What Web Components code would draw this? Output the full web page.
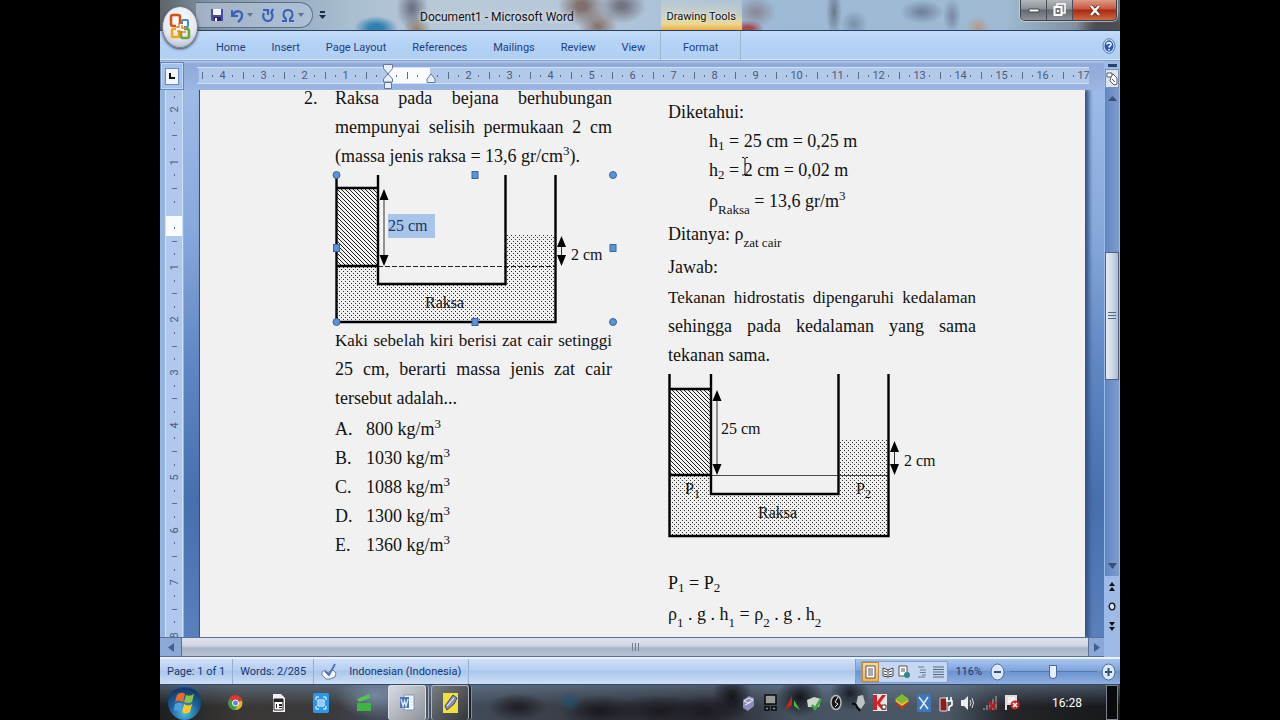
<!DOCTYPE html>
<html lang="id">
<head>
<meta charset="utf-8">
<title>Document1 - Microsoft Word</title>
<style>
html,body{margin:0;min-height:100%;background:#000}
body{font-family:Roboto,"Open Sans",sans-serif;font-size:11px;color:#1f3f77}
</style>
</head>
<body>
<desktop-stage>
  <word-window></word-window>
  <task-bar></task-bar>
</desktop-stage>
<script>
const reset = `<style>
*{box-sizing:border-box}
button{font:inherit;color:inherit;background:none;border:0;padding:0;margin:0;display:inline-flex;align-items:center;justify-content:center}
a{color:inherit;text-decoration:none}
svg{display:block}
</style>`;
const define = (name, html) => customElements.define(name, class extends HTMLElement {
  constructor() {
    super();
    this.attachShadow({mode: "open"}).innerHTML = reset + (typeof html === "function" ? html(this) : html);
  }
});

/* Ruler marks: numbers on whole units, ticks on halves, dots on quarters */
const marks = (from, to, hidden) => {
  let out = "";
  for (let i = from; i <= to; i++) {
    if (hidden.includes(i)) out += `<span class="c" data-i="${i}"></span>`;
    else if (i % 4 === 0) out += `<span class="c n"><b>${Math.abs(i / 4)}</b></span>`;
    else out += `<span class="c"><i class="${i % 2 === 0 ? "tick" : "dot"}"></i></span>`;
  }
  return out;
};

define("title-bar", `<style>
:host{display:flex;align-items:center;height:31px;border-bottom:1px solid #27405f;color:#111;font-size:12px;
 background:
 radial-gradient(ellipse 22px 12px at 216px 28px,#2e80b0 30%,transparent),
 radial-gradient(ellipse 16px 22px at 252px 8px,#6f7486 10%,transparent),
 radial-gradient(ellipse 14px 14px at 257px 30px,#9c8568 10%,transparent),
 radial-gradient(ellipse 24px 20px at 422px 6px,#80716f 20%,transparent),
 radial-gradient(ellipse 20px 18px at 438px 26px,#8a7773 10%,transparent),
 radial-gradient(ellipse 24px 18px at 462px 6px,#747482 15%,transparent),
 radial-gradient(ellipse 20px 16px at 596px 12px,#8c8b99 10%,transparent),
 radial-gradient(ellipse 16px 9px at 588px 29px,#a24a55 30%,transparent),
 radial-gradient(ellipse 8px 26px at 674px 12px,#6f7f92 10%,transparent),
 radial-gradient(ellipse 14px 14px at 694px 24px,#7d93ac 10%,transparent),
 radial-gradient(ellipse 22px 12px at 762px 12px,#71839d 10%,transparent),
 radial-gradient(ellipse 9px 18px at 792px 16px,#7a8da5 10%,transparent),
 radial-gradient(ellipse 12px 12px at 818px 28px,#b39c92 10%,transparent),
 radial-gradient(ellipse 30px 20px at 946px 28px,#4b4d52 40%,transparent),
 linear-gradient(90deg,#5f6468,#8294a4 5%,#a9bfd2 20%,#b9c9d7 30%,#b5c7d9 45%,#9dbad6 62%,#9fbad2 88%,#6f7680)}
.qat{display:flex;align-items:center;gap:7px;width:117px;height:26px;margin-left:36px;padding-left:14px;border:1px solid #5d6f88;border-left:0;border-radius:0 14px 14px 0;background:#b9c9dd99;align-self:flex-start;margin-top:2px}
.qat .drop{margin:0 2px 0 -4px}
.more{margin-left:6px}
h1{font:inherit;font-size:12px;margin:0 0 0 94px;padding-top:3px;white-space:nowrap;text-shadow:0 0 4px #fff}
.ctx{align-self:stretch;width:81px;margin-left:87px;display:flex;align-items:center;justify-content:center;padding-top:3px;font-size:11px;white-space:nowrap;background:linear-gradient(#dfe2cf33,#dfdcc0aa 55%,#ecd98c 80%,#e9ae48);text-shadow:0 0 3px #fff}
.win{display:flex;margin:0 3px 0 auto;align-self:flex-start;height:21px;border:1px solid #3c434d;border-top:0;border-radius:0 0 5px 5px;overflow:hidden;box-shadow:0 0 0 1px #d5dbe3aa}
.win button{width:26px;background:linear-gradient(#b4b8bd,#8b9096 45%,#62686f 50%,#8e9399);border-right:1px solid #4b5058}
.win .x{width:43px;border:0;background:linear-gradient(#dd9a86,#c8553e 45%,#a92811 50%,#cf6a45)}
</style>
<div class="qat">
<button aria-label="Save"><svg width="14" height="14"><path d="M1 1h12v12H2L1 12z" fill="#4a48a8"/><path d="M3 1h8v6H3z" fill="#f1f4fb"/><path d="M4 9h7v4H4z" fill="#26266a"/><path d="M5 10h2v3H5z" fill="#fff"/></svg></button>
<button aria-label="Undo"><svg width="13" height="15"><path d="M1 2v6h6" fill="none" stroke="#3c62b8" stroke-width="2"/><path d="M2 7C5 1 12 3 11 8 11 11 9 12 7 14" fill="none" stroke="#3c62b8" stroke-width="2.4"/></svg></button>
<button class="drop" aria-label="Undo history"><svg width="6" height="4"><path d="M0 0h6L3 4z" fill="#5f7396"/></svg></button>
<button aria-label="Repeat"><svg width="12" height="14"><path d="M2 5C0 9 2 13 6 13s6-5 3-9M1 2h5v5M9 5l2-4" fill="none" stroke="#3c62b8" stroke-width="2.2"/></svg></button>
<button aria-label="Symbol"><svg width="14" height="13"><path d="M1 12h4v-2C1 7 2 1 7 1s6 6 2 9v2h4" fill="none" stroke="#3c62b8" stroke-width="2"/></svg></button>
<button class="drop" aria-label="More symbols"><svg width="6" height="4"><path d="M0 0h6L3 4z" fill="#5f7396"/></svg></button>
</div>
<button class="more" aria-label="Customize Quick Access Toolbar"><svg width="7" height="8"><path d="M1 0h5v2H1zM0 4h7L3.500 8z" fill="#1d2a44"/></svg></button>
<h1>Document1 - Microsoft Word</h1>
<div class="ctx">Drawing Tools</div>
<div class="win">
<button aria-label="Minimize"><svg width="12" height="5"><path d="M1 1h10v3H1z" fill="#fff" stroke="#444"/></svg></button>
<button aria-label="Restore"><svg width="13" height="14"><path d="M4 1h8v9H4z" fill="#888" stroke="#fff" stroke-width="1.500"/><path d="M1.500 4h7v8h-7z" fill="#777" stroke="#fff" stroke-width="2"/><path d="M4 7h2v2H4z" fill="#fff"/></svg></button>
<button class="x" aria-label="Close"><svg width="12" height="11"><path d="M2 1l8 9M10 1L2 10" stroke="#5a2018" stroke-width="4"/><path d="M2 1l8 9M10 1L2 10" stroke="#fff" stroke-width="2.600"/></svg></button>
</div>`);

define("office-button", `<style>
:host{display:block}
button{width:36px;height:42px;border-radius:50%;background:radial-gradient(circle at 50% 35%,#fff,#e3e8ef 55%,#a4afbf);border:1px solid #6f7e94;box-shadow:0 1px 3px #334}
</style><button aria-label="Office Button"><svg width="24" height="30" viewBox="0 0 24 30" fill="none" stroke-width="2.600">
<rect x="3" y="3" width="9" height="11" rx="2" stroke="#d8501c"/><rect x="14" y="8" width="6" height="7" rx="1" stroke="#4d8bc8" stroke-width="2"/>
<rect x="4" y="17" width="7" height="8" rx="1" stroke="#f0a818"/><rect x="13" y="17" width="8" height="9" rx="2" stroke="#6ea53a"/><path d="M8 12h8v7H8z" fill="#fff" stroke="none"/><path d="M11 11v4H8M14 13v3h4M9 19h3v4M14 20h4" stroke-width="1.500" stroke="#e88426"/></svg></button>`);

define("ribbon-tabs", `<style>
:host{display:flex;align-items:stretch;height:30px;padding-left:56px;background:linear-gradient(#c3dcf9,#b4d2f5 40%,#b0cff3);border-bottom:1px solid #86a6d2;box-shadow:inset 0 -1px #d4e6fb;color:#1d3f80}
nav{display:flex;gap:26px;align-items:center;padding-top:3px}
.ctx{display:flex;align-items:center;justify-content:center;width:81px;margin-left:15px;padding-top:3px;border:solid #9fb6c9;border-width:0 1px}
.help{margin:0 4px 0 auto}
</style>
<nav><a href="#">Home</a><a href="#">Insert</a><a href="#">Page Layout</a><a href="#">References</a><a href="#">Mailings</a><a href="#">Review</a><a href="#">View</a></nav>
<div class="ctx"><a href="#">Format</a></div>
<button class="help" aria-label="Help"><svg width="14" height="16" viewBox="0 0 14 16"><ellipse cx="7" cy="8" rx="6" ry="7.300" fill="#d9e8fb" stroke="#4e78bb"/><ellipse cx="7" cy="8" rx="4.500" ry="5.800" fill="#2658b6"/><path d="M5 6.500C5 4 9.300 4 9 6.500 9 8 7 8 7 9.500M7 11v1.500" fill="none" stroke="#fff" stroke-width="1.600"/></svg></button>`);

define("tab-selector", `<style>:host{display:flex}
button{width:24px;height:28px;border:1px solid #5f86c2;background:#a5c1ea;box-shadow:inset 0 0 0 1px #c5daf6}
span{width:14px;height:17px;border:1px solid #6b8cc0;background:#f2f6fc;display:grid;place-items:center}
</style><button aria-label="Left tab"><span><svg width="6" height="6"><path d="M1 0v5h5" fill="none" stroke="#111" stroke-width="2"/></svg></span></button>`);

define("h-ruler", `<style>
:host{display:block;width:892px;height:17px}
.r{display:flex;height:17px;align-items:center;overflow:hidden;border:solid #d0e0f6;border-width:1px 0;color:#4b5b79;background:linear-gradient(90deg,#96b2df 2px,transparent 2px,transparent 191px,#fafbfd 191px,#fafbfd 233px,transparent 233px) #b3c9ea}
.c{flex:1;width:0;display:flex;justify-content:center;align-items:center}
b{font-weight:400;white-space:nowrap}
.tick{width:1px;height:7px;background:#5a6b8b}.dot{width:1px;height:2px;background:#5a6b8b}
.w{position:relative}
.m{position:absolute;left:185px;top:-3px}
</style><div class="w"><div class="r">${marks(-18, 68, [0, 4])}</div>
<svg class="m" width="56" height="27" fill="#e8eff9" stroke="#62789f"><path d="M1.500 .500h9v4L6 10 1.500 4.500zM6 10l4.500 5v3h-9v-3zM2.500 18.500h7v6h-7zM45 18.500v-3.500l4-5 4 5v3.500z"/></svg></div>`);

define("v-ruler", `<style>
:host{display:block;width:18px;height:552px;border:solid #d0e0f6;border-width:0 1px;color:#4b5b79;background:linear-gradient(transparent 126px,#fafbfd 126px,#fafbfd 146px,transparent 146px) #b0c8ec}
.r{display:flex;flex-direction:column;height:100%}
.c{flex:1;height:0;display:flex;justify-content:center;align-items:center}
b{font-weight:400;transform:rotate(-90deg)}
.tick{height:1px;width:5px;background:#5a6b8b}.dot{height:2px;width:1px;background:#5a6b8b}
</style><div class="r">${marks(-9, 32, [0])}</div>`);

/* U-tube diagram. Attributes: top, fluid, level, base, floor (heights in the drawing) */
define("u-tube", el => {
  const a = n => +el.getAttribute(n), has = n => el.hasAttribute(n);
  const top = a("top"), join = a("fluid"), level = a("level"), base = a("base"), floor = a("floor"), mid = a("label");
  const arrow = (x, y1, y2) => `<path d="M${x} ${y1 + 6}V${y2 - 6}" stroke="#333" stroke-width="1"/><path d="M${x} ${y1}l4.500 11h-9zM${x} ${y2}l4.500-11h-9z"/>`;
  const handles = [[1.5, 4], [278, 4], [1.5, floor], [278, floor]].map(p => `<circle cx="${p[0]}" cy="${p[1]}" r="3.500"/>`).join("") +
    [[140, 4], [140, floor], [1.5, 77], [278, 77]].map(p => `<rect x="${p[0] - 3}" y="${p[1] - 3.5}" width="6" height="7"/>`).join("");
  return `<style>
:host{display:block}
svg{overflow:visible}
text{font:16px "Liberation Serif",serif;fill:#111}
.sub{font-size:12px}
</style><svg width="288" height="${a("box")}">
<defs>
<pattern id="dots" width="4" height="4" patternUnits="userSpaceOnUse"><path d="M0 0h1v1H0zM2 2h1v1H2z" fill="#333"/></pattern>
<pattern id="hatch" width="4" height="4" patternUnits="userSpaceOnUse"><path d="M-1-1l6 6M-1 3l2 2M3-1l2 2" stroke="#222" stroke-width="1"/></pattern>
</defs>
<path d="M2 ${join}H43V${base}H170V${level}H220V${floor}H2z" fill="url(#dots)"/>
<path d="M2 ${top}H43V${join}H2z" fill="url(#hatch)"/>
<path d="M43 ${join}.500H220" stroke="#222" ${has("dashed") ? 'stroke-dasharray="5 2"' : 'stroke-width=".800"'} />
<path d="M1.500 4V${floor}H220.500V4M43 4V${base}H170.500V4M2 ${top}H43M2 ${join}H43" fill="none" stroke="#000" stroke-width="2.400"/>
${arrow(49, top + 1, join)}${arrow(226.5, level + 1, join)}
${has("selected") ? '<rect x="53" y="43" width="47" height="24" fill="#a9c4e9"/>' : ""}
<text x="53" y="${a("tall")}" ${has("selected") ? 'style="fill:#17375e"' : ""}>25 cm</text>
<text x="236" y="${a("short")}">2 cm</text>
<text x="90" y="${mid}">Raksa</text>
${has("points") ? `<text x="17" y="${join + 19}">P<tspan class="sub" dy="4">1</tspan></text><text x="188" y="${join + 19}">P<tspan class="sub" dy="4">2</tspan></text>` : ""}
${has("selected") ? `<g fill="#5b93d6" stroke="#3a659f">${handles}</g>` : ""}
</svg>`;
});

define("doc-page", `<style>
:host{display:block;flex:1;min-width:0;height:547px;overflow:hidden;background:#f1f1f1;border-left:1px solid #3f4c66;box-shadow:3px 0 4px #3d5888;color:#111;font-family:"Liberation Serif",serif;font-size:18px;line-height:29px;white-space:nowrap}
.cols{display:grid;grid-template-columns:31px 277px 308px;padding-left:104px}
p,ol{margin:0}
.first{line-height:17px;padding-bottom:6px}
.a{margin:8px 0 0 56px;width:308px}
.j{text-align-last:justify}
.tight{font-size:17px}
.in{padding-left:41px}
.tall{line-height:33px}
.mid{line-height:32px}
sub,sup{font-size:13px;line-height:0}
sup{vertical-align:7px}
sub{vertical-align:-3px}
.low sub{vertical-align:-7px}
.ops{list-style:none;padding:2px 0 0}
.ops li{display:grid;grid-template-columns:31px 1fr}
.beam{position:relative}
.beam svg{position:absolute;left:32px;top:-4px}
</style>
<div class="cols">
<p class="first">2.</p>
<section>
<p class="j first">Raksa pada bejana berhubungan</p>
<p class="j">mempunyai selisih permukaan 2 cm</p>
<p>(massa jenis raksa = 13,6 gr/cm<sup>3</sup>).</p>
<u-tube box="155" top="17" fluid="95" level="64" base="113" floor="151" label="137" tall="60" short="89" dashed selected></u-tube>
<p class="j tight">Kaki sebelah kiri berisi zat cair setinggi</p>
<p class="j">25 cm, berarti massa jenis zat cair</p>
<p>tersebut adalah...</p>
<ol class="ops">
<li><span>A.</span><span>800 kg/m<sup>3</sup></span></li>
<li><span>B.</span><span>1030 kg/m<sup>3</sup></span></li>
<li><span>C.</span><span>1088 kg/m<sup>3</sup></span></li>
<li><span>D.</span><span>1300 kg/m<sup>3</sup></span></li>
<li><span>E.</span><span>1360 kg/m<sup>3</sup></span></li>
</ol>
</section>
<section class="a">
<p>Diketahui:</p>
<p class="in">h<sub>1</sub> = 25 cm = 0,25 m</p>
<p class="in"><span class="beam">h<sub>2</sub> = 2 cm = 0,02 m<svg width="8" height="20"><path d="M1 1.500h2l1 1 1-1h2M4 2v16M1 19h2l1-1 1 1h2" fill="none" stroke="#111"/></svg></span></p>
<p class="in tall low">ρ<sub>Raksa</sub> = 13,6 gr/m<sup>3</sup></p>
<p class="tall low">Ditanya: ρ<sub>zat cair</sub></p>
<p class="mid">Jawab:</p>
<p class="j tight">Tekanan hidrostatis dipengaruhi kedalaman</p>
<p class="j">sehingga pada kedalaman yang sama</p>
<p>tekanan sama.</p>
<u-tube box="199" top="19" fluid="105" level="70" base="124" floor="166" label="148" tall="64" short="96" points></u-tube>
<p>P<sub>1</sub> = P<sub>2</sub></p>
<p class="tall low">ρ<sub>1</sub> . g . h<sub>1</sub> = ρ<sub>2</sub> . g . h<sub>2</sub></p>
</section>
</div>`);

define("h-scroll", `<style>
:host{display:flex;height:20px;background:#8ba9d6;border:solid #57719c;border-width:1px 0}
button{width:21px}
.right{width:15px}
.thumb{flex:1;display:grid;place-items:center;border:1px solid #5b6f94;border-width:0 1px;background:linear-gradient(#dfe3ec,#ccd3e0 45%,#a9b3c6 55%,#b8c2d3)}
</style><button aria-label="Scroll left"><svg width="6" height="9"><path d="M6 0v9L0 4.500z" fill="#3f5f96"/></svg></button>
<div class="thumb"><svg width="7" height="8"><path d="M.500 0v8M3.500 0v8M6.500 0v8" stroke="#737f94"/></svg></div>
<button class="right" aria-label="Scroll right"><svg width="6" height="9"><path d="M0 0v9l6-4.500z" fill="#3f5f96"/></svg></button>`);

define("v-scroll", `<style>
:host{display:flex;flex-direction:column;align-items:center;width:16px;background:#9dbbe6}
.split{width:9px;height:3px;margin:3px 0 2px;background:#26426f}
.view{width:14px;height:19px;background:#dfe5ef;border:1px solid #7d90b2}
.track{display:flex;flex-direction:column;align-items:center;width:14px;height:488px;background:linear-gradient(90deg,#6486bd,#7d9dd0)}
.track button{height:20px}
.thumb{width:14px;height:128px;margin:144px 0 auto;display:grid;place-items:center;border:1px solid #4f5f83;background:linear-gradient(90deg,#e6ecf4,#cfdae8 50%,#a9bcd4)}
.nav{height:20px}
</style><div class="split"></div>
<button class="view" aria-label="View Ruler"><svg width="12" height="15"><path d="M1 2h5v4H1z" fill="#fff" stroke="#4b5a78"/><path d="M7 3l4 4v6l-3 1-4-4 1-4z" fill="#fff" stroke="#4b5a78"/><path d="M6 8l3 3" stroke="#4b5a78"/></svg></button>
<div class="track"><button aria-label="Scroll up"><svg width="9" height="5"><path d="M0 5h9L4.500 0z" fill="#33507f"/></svg></button>
<div class="thumb"><svg width="8" height="9"><path d="M0 .500h8M0 3.500h8M0 6.500h8" stroke="#5a6780"/></svg></div>
<button aria-label="Scroll down"><svg width="9" height="6"><path d="M0 0h9L4.500 6z" fill="#33507f"/></svg></button></div>
<button class="nav" aria-label="Previous page"><svg width="6" height="9"><path d="M0 4h6L3 0zM0 9h6L3 5z" fill="#111"/></svg></button>
<button class="nav" aria-label="Select browse object"><svg width="8" height="9"><ellipse cx="4" cy="4.500" rx="2.800" ry="3.400" fill="#d5e2f4" stroke="#111" stroke-width="1.300"/></svg></button>
<button class="nav" aria-label="Next page"><svg width="6" height="9"><path d="M0 0h6L3 4zM0 5h6L3 9z" fill="#111"/></svg></button>`);

define("status-bar", `<style>
:host{display:flex;align-items:stretch;height:28px;border-top:2px solid #e9f1fc;border-bottom:1px solid #30486d;background:linear-gradient(#cfdffa,#b4cef0 45%,#a9c7ec 50%,#cfdff3);color:#17386f;white-space:nowrap}
.i{display:flex;align-items:center;border-right:1px solid #94b0d9;padding:0 7px}
.l{gap:12px}
.right{display:flex;align-items:center;margin-left:auto;padding:0 4px 0 5px;border-left:1px solid #7e9cca;background:linear-gradient(#a9c5ef,#7fa5dc 45%,#6a93d0 50%,#8fb0df)}
.views{display:flex;height:22px;border:1px solid #7f9bc6;background:#c6d8f1;border-radius:2px}
.views button{width:17px}
.views .on{background:linear-gradient(#f9d9a0,#f3ac4e);box-shadow:inset 0 0 0 1px #c08a3c}
output{margin:0 8px 0 7px}
input{appearance:none;width:87px;height:17px;margin:0 4px 0 5px;background:linear-gradient(#5579b1,#5579b1) center/100% 1px no-repeat}
input::-webkit-slider-thumb{appearance:none;width:8px;height:14px;background:#e7eef8;border:1px solid #4c6998;border-radius:1px 1px 5px 5px}
.z{width:15px}
</style>
<div class="i">Page: 1 of 1</div><div class="i">Words: 2/285</div>
<div class="i l"><svg width="16" height="18"><path d="M1 9c3-3 4 0 5 1l6-3 3 3-1 4-5 2H5L1 12z" fill="#f3f5fa" stroke="#6a7da4"/><path d="M4 8l4 4 6-11" fill="none" stroke="#4e6fb2" stroke-width="1.800"/></svg><span>Indonesian (Indonesia)</span></div>
<div class="right"><div class="views">
<button class="on" aria-label="Print Layout"><svg width="11" height="14"><path d="M1 1h9v12H1z" fill="#fff" stroke="#555"/><path d="M3 4h5M3 6h5M3 8h5M3 10h5" stroke="#555"/></svg></button>
<button aria-label="Full Screen Reading"><svg width="12" height="12"><path d="M1 2l5 2 5-2v8l-5 1-5-1zM6 4v7M2 5l3 1M2 8l3 1M10 5L7 6M10 8L7 9" fill="#fff" stroke="#444"/></svg></button>
<button aria-label="Web Layout"><svg width="13" height="14"><path d="M1 1h8v10H1z" fill="#fff" stroke="#555"/><path d="M3 4h4M3 6h4" stroke="#555"/><circle cx="9" cy="10" r="3" fill="#2b8a86"/></svg></button>
<button aria-label="Outline"><svg width="10" height="12"><path d="M1 1h6M3 4h6M3 6.500h6M5 9h4M1 11h7" stroke="#6d7a94"/></svg></button>
<button aria-label="Draft"><svg width="11" height="12"><path d="M0 1h11M0 3.500h11M0 6h11M0 8.500h11M0 11h11" stroke="#56647f"/></svg></button></div>
<output>116%</output>
<button class="z" aria-label="Zoom out"><svg width="15" height="18"><ellipse cx="7.500" cy="9" rx="6.500" ry="8" fill="#dce7f7" stroke="#4f6c9b"/><path d="M4 9h7" stroke="#34507f" stroke-width="2"/></svg></button>
<input type="range" aria-label="Zoom" min="10" max="225" value="116">
<button class="z" aria-label="Zoom in"><svg width="15" height="18"><ellipse cx="7.500" cy="9" rx="6.500" ry="8" fill="#dce7f7" stroke="#4f6c9b"/><path d="M4 9h7M7.500 5v8" stroke="#34507f" stroke-width="2"/></svg></button></div>`);

define("word-window", `<style>
:host{display:block;background:#96b2df;position:relative}
office-button{position:absolute;left:2px;top:6px}
.work{display:flex;align-items:stretch}
.main{flex:1;min-width:0}
.rule{display:flex;height:29px;overflow:hidden;background:linear-gradient(#b3c8ea 0,#8faad8 3px,#9bb6e2)}
tab-selector{margin-top:1px}
h-ruler{margin:6px auto 0 13px}
.canvas{display:flex;height:547px;overflow:hidden;background:linear-gradient(#9dbbe7,#88a9dc 25%,#5f87c4 50%,#466fae 75%,#5a80bd)}
.canvas aside{flex:none;padding:0 16px 0 5px;height:552px;background:linear-gradient(90deg,#93b3e0 24px,transparent 24px)}
.edge{flex:none;width:19px;background:linear-gradient(90deg,#2e4d8088,transparent 8px)}
</style>
<title-bar></title-bar><ribbon-tabs></ribbon-tabs><office-button></office-button>
<div class="work"><div class="main">
<div class="rule"><tab-selector></tab-selector><h-ruler></h-ruler></div>
<div class="canvas"><aside><v-ruler></v-ruler></aside><doc-page></doc-page><div class="edge"></div></div>
<h-scroll></h-scroll></div><v-scroll></v-scroll></div>
<status-bar></status-bar>`);

define("task-bar", `<style>
:host{display:flex;align-items:center;flex:1;min-height:35px;padding-left:8px;color:#fff;font-size:12px;
background:
radial-gradient(ellipse 30px 14px at 358px 22px,#1d1c22,transparent),
radial-gradient(ellipse 12px 10px at 410px 16px,#24506c,transparent),
radial-gradient(ellipse 40px 16px at 440px 26px,#19181e,transparent),
radial-gradient(ellipse 50px 16px at 500px 26px,#1b1a20,transparent),
radial-gradient(ellipse 30px 16px at 545px 26px,#1b1a20,transparent),
radial-gradient(ellipse 20px 24px at 572px 12px,#141419,transparent),
radial-gradient(ellipse 24px 20px at 640px 12px,#141419,transparent),
radial-gradient(ellipse 20px 18px at 690px 8px,#1c2026,transparent),
radial-gradient(ellipse 40px 24px at 216px 10px,#76889e,transparent),
linear-gradient(#6f879f88,transparent 60%),
linear-gradient(90deg,#1d1f20,#3a3836 8%,#3b3a3b 18%,#44546a 26%,#3f4650 36%,#2b2b33 58%,#465260 66%,#4b5866 82%,#24262a 88%,#15171a)}
.apps{display:flex;align-items:center;gap:5px;margin-left:15px}
.apps button{width:38px;height:35px}
.apps .on{border:1px solid #d8dde3;border-bottom:0;border-radius:3px;background:linear-gradient(135deg,#d8dce2,#8d939b);box-shadow:2px 0 #4d545c,3px 0 #aab}
.apps .open{border:1px solid #aeb4bb;border-bottom:0;border-radius:3px;background:linear-gradient(135deg,#777c80,#33363a);box-shadow:2px 0 #222,3px 0 #889}
.orb{width:33px;height:35px;border-radius:50%;background:radial-gradient(circle at 50% 80%,#46c0e8,#1d5e93 45%,#143a66 75%,#7fb0d2)}
.tray{display:flex;align-items:center;margin-left:auto;gap:2px}
.tray button{width:20px;height:24px}
.tray svg{flex:none}
time{margin:0 24px 0 30px}
.desk{width:12px;height:35px;border:1px solid #7b838c;background:#0a0b0d;margin-right:2px}
</style>
<button class="orb" aria-label="Start"><svg width="22" height="26" viewBox="0 0 22 26"><path d="M3 5q4-4 8-1L9 12q-4-3-8 0z" fill="#ee6a2b"/><path d="M12 5q4 2 8-1l-2 8q-4 2-8 0z" fill="#8cc341"/><path d="M1 14q4-3 8 0l-2 8q-3-3-7-1z" fill="#4e9fe0"/><path d="M10 14q4 3 8 0l-2 8q-4 3-8 0z" fill="#fbc72c"/></svg></button>
<div class="apps">
<button aria-label="Chrome"><svg width="15" height="18" viewBox="0 0 15 15"><circle cx="7.500" cy="7.500" r="7" fill="#ddb928"/><path d="M7.500 7.500L1 4A7 7 0 0 1 14.300 5z" fill="#d9382c"/><path d="M7.500 7.500L1 4a7 7 0 0 0 6 10.500l3-5z" fill="#3b9b4b"/><circle cx="7.500" cy="7.500" r="3" fill="#4c86e4" stroke="#fff"/></svg></button>
<button aria-label="Calendar"><svg width="13" height="18"><path d="M1 0h8l4 4v14H1z" fill="#f1f1f1"/><path d="M2 5h9v11H2z" fill="#fff" stroke="#222"/><path d="M2 5h9v3H2zM4 10h1v4H4zM7 10h3v2H7zM7 13h3v1H7z" fill="#222"/></svg></button>
<button aria-label="Screen recorder"><svg width="16" height="20"><rect width="16" height="20" rx="2" fill="#2c97e8"/><path d="M3 7V4h3M10 4h3v3M3 13v3h3M10 16h3v-3M5 7h6v6H5zM6 9h4M6 11h4" fill="none" stroke="#fff"/></svg></button>
<button aria-label="Video editor"><svg width="14" height="18"><path d="M0 5l12-5 1 4L2 8z" fill="#56c553"/><path d="M0 9h14v8H0z" fill="#3fb541"/></svg></button>
<button class="on" aria-label="Microsoft Word"><svg width="15" height="18"><path d="M4 1h10v15H4z" fill="#f8fafd" stroke="#7d93bd"/><path d="M0 3h9v11H0z" fill="#4e77bb"/><path d="M1 5l2 7 1.500-5L6 12l2-7M10 5h3M10 8h3M10 11h3" fill="none" stroke="#dfe9fa" stroke-width="1.300"/></svg></button>
<button class="open" aria-label="Notes"><svg width="15" height="20"><path d="M0 0h15v20H0z" fill="#efe135"/><path d="M2 13l8-11 4 3-3 6-7 6z" fill="#8790bd" stroke="#38427a"/><path d="M4 13l7-8" stroke="#fff"/></svg></button>
</div>
<div class="tray">
<button aria-label="Cube"><svg width="13" height="16"><path d="M1 5l6-4 5 2v8l-6 5-5-3z" fill="#8d8bc0"/><path d="M2 6l5-3 4 2-5 3zM3 10l6-3" stroke="#eee" fill="none"/></svg></button>
<button aria-label="Desktop"><svg width="13" height="17"><path d="M1 1h11v9H1zM1 13h4v3H1zM8 13h4v3H8z" fill="#999" stroke="#090909" stroke-width="1.500"/></svg></button>
<button aria-label="Graphics"><svg width="15" height="14"><path d="M7 0v9l-7 5z" fill="#df1f17"/><path d="M9 4l6 10-6-4z" fill="#3bc33b"/></svg></button>
<button aria-label="Safely remove"><svg width="15" height="16"><path d="M0 5l7-3 7 2-2 8H1z" fill="#cfd5cd"/><path d="M5 10l3 4 6-10" fill="none" stroke="#39a540" stroke-width="2.500"/></svg></button>
<button aria-label="Media"><svg width="12" height="17"><ellipse cx="6" cy="8.500" rx="5" ry="7" fill="#161616" stroke="#bbb" stroke-width="1.500"/><path d="M8 3L5 8l3 2-3 3" fill="none" stroke="#eee"/></svg></button>
<button aria-label="Bird"><svg width="15" height="18"><path d="M7 2l5-1 2 8-4 6-5-4z" fill="#bfc2c2"/><path d="M1 10q4-1 5 3l3 4" fill="none" stroke="#050505" stroke-width="2"/></svg></button>
<button aria-label="Antivirus"><svg width="14" height="17"><path d="M0 0h14v17H0z" fill="#e9e4e2"/><path d="M0 1h4v7l5-7h4L7 9l6 7H9L4 10v6H0z" fill="#d52027"/><path d="M9 11h4v4H9z" fill="#fff" stroke="#333"/></svg></button>
<button aria-label="Layers"><svg width="15" height="17"><path d="M0 9l7-3 7 3-7 6z" fill="#b9342b"/><path d="M0 7l7-5 7 5-7 5z" fill="#e7c62b"/><path d="M0 5l7-5 7 5-7 5z" fill="#80b92d"/></svg></button>
<button aria-label="Tools"><svg width="14" height="18"><path d="M0 0h14v18H0z" fill="#3c78b9"/><path d="M2 3l9 12M11 3L3 15" stroke="#e1eaf4" stroke-width="1.500"/></svg></button>
<button aria-label="Power"><svg width="14" height="18"><path d="M1 4h7v13H1z" fill="#8d1c1c" stroke="#ddd"/><path d="M8 3v4M12 3v4M7 7h6v4l-3 2v4" fill="none" stroke="#fff" stroke-width="1.600"/></svg></button>
<button aria-label="Volume"><svg width="15" height="16"><path d="M0 5h3l4-4v14l-4-4H0z" fill="#eee"/><path d="M9 5q2 3 0 6M11 3q3 5 0 10" fill="none" stroke="#ddd"/></svg></button>
<button aria-label="Network"><svg width="15" height="16"><path d="M0 13h2v2H0zM3 10h2v5H3zM6 7h2v8H6zM9 4h2v11H9zM12 1h2v14h-2z" fill="#777"/><path d="M6 7l7 8M13 7l-7 8" stroke="#bd1c20" stroke-width="2.500"/></svg></button>
<button aria-label="Action Center"><svg width="15" height="17"><path d="M1 1v15M2 2h9v8H2z" fill="#f2f2f2" stroke="#ddd" stroke-width="2"/><circle cx="10" cy="11" r="4.500" fill="#cf2727"/><path d="M8 9l4 4M12 9l-4 4" stroke="#fff" stroke-width="1.500"/></svg></button>
</div><time>16:28</time><button class="desk" aria-label="Show desktop"></button>`);

define("desktop-stage", `<style>
:host{display:flex;flex-direction:column;min-height:100vh;margin:0 calc(100% / 8)}
</style><slot></slot>`);
</script>
</body>
</html>
